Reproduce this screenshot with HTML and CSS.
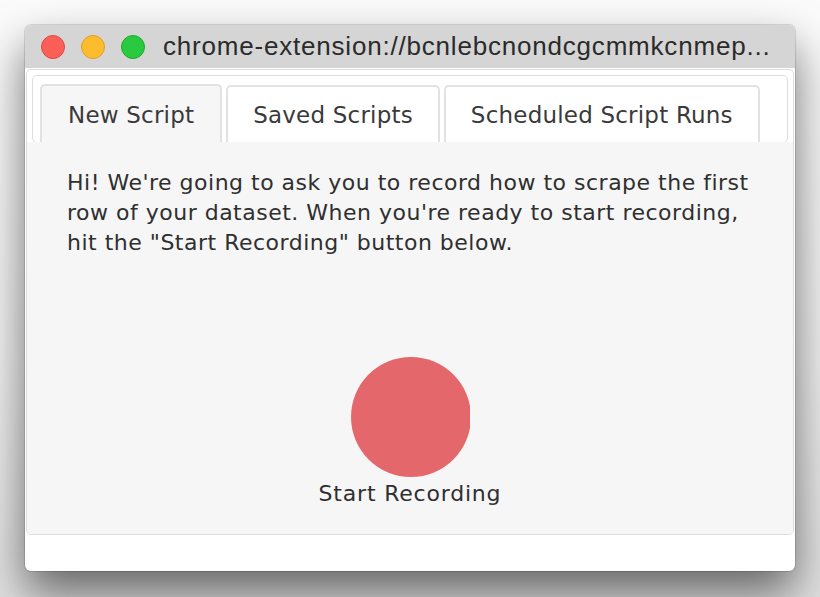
FILE: index.html
```html
<!DOCTYPE html>
<html>
<head>
<meta charset="utf-8">
<link rel="stylesheet" href="styles.css">
</head>
<body>
<div class="window">
  <div class="titlebar">
    <div class="lights">
      <span class="light red"></span>
      <span class="light yellow"></span>
      <span class="light green"></span>
    </div>
    <div class="title">chrome-extension://bcnlebcnondcgcmmkcnmep...</div>
  </div>
  <div class="body">
    <div class="tabs">
      <ul class="nav">
        <li class="tab active">New Script</li>
        <li class="tab">Saved Scripts</li>
        <li class="tab">Scheduled Script Runs</li>
      </ul>
      <div class="panel">
        <p class="intro">Hi! We're going to ask you to record how to scrape the first<br>row of your dataset. When you're ready to start recording,<br>hit the "Start Recording" button below.</p>
        <div class="record">
          <div class="dot-wrap"><div class="dot"></div></div>
          <div class="record-label">Start Recording</div>
        </div>
      </div>
    </div>
  </div>
</div>
</body>
</html>
```
FILE: styles.css
```css
html, body {
  margin: 0;
  padding: 0;
}
body {
  width: 820px;
  height: 597px;
  overflow: hidden;
  background: linear-gradient(#fbfbfb 0%, #f0f0f0 60%, #e0e0e0 100%);
  padding: 25px 0 0 25px;
  box-sizing: border-box;
  font-family: "DejaVu Sans", sans-serif;
}
.window {
  width: 770px;
  height: 546px;
  border-radius: 6px;
  background: #fff;
  overflow: hidden;
  box-shadow: 0 0 0 1px rgba(0,0,0,0.12), 0 22px 45px rgba(0,0,0,0.55);
  display: flex;
  flex-direction: column;
}
.titlebar {
  height: 43px;
  flex: none;
  background: #d5d5d5;
  display: flex;
  align-items: center;
  padding-left: 16px;
  box-sizing: border-box;
}
.lights {
  display: flex;
  gap: 16px;
}
.light {
  width: 24px;
  height: 24px;
  border-radius: 50%;
  box-sizing: border-box;
}
.red { background: #fc5f57; border: 1px solid #de4740; }
.yellow { background: #fdbc2e; border: 1px solid #dea123; }
.green { background: #29c940; border: 1px solid #1aab29; }
.title {
  margin-left: 18px;
  font-family: "Liberation Sans", sans-serif;
  font-size: 26px;
  letter-spacing: 0.8px;
  color: #2b2b2b;
  white-space: nowrap;
}
.body {
  flex: 1;
  padding: 1px 1px 0 1px;
  display: flex;
  flex-direction: column;
}
.tabs {
  height: 466px;
  border: 1px solid #dddddd;
  border-radius: 5px;
  background: #fff;
  display: flex;
  flex-direction: column;
  box-sizing: border-box;
  overflow: hidden;
}
.nav {
  list-style: none;
  margin: 5px 5px 0 5px;
  padding: 9px 0 0 7px;
  height: 68px;
  box-sizing: border-box;
  border: 1px solid #dddddd;
  border-radius: 5px;
  display: flex;
  gap: 4px;
  align-items: flex-end;
}
.tab {
  height: 58px;
  box-sizing: border-box;
  border: 2px solid #e2e2e2;
  border-bottom: none;
  border-radius: 5px 5px 0 0;
  background: #fff;
  padding: 0 25px;
  display: flex;
  align-items: center;
  font-size: 23px;
  letter-spacing: 0.2px;
  color: #3a3a3a;
  margin-bottom: -1px;
  white-space: nowrap;
}
.tab.active {
  background: #f6f6f6;
  height: 59px;
  padding: 0 26px;
}
.panel {
  flex: 1;
  background: #f6f6f6;
  margin-top: -1px;
  display: flex;
  flex-direction: column;
  align-items: center;
}
.intro {
  margin: 26px 30px 0 40px;
  font-size: 22px;
  letter-spacing: 0.5px;
  line-height: 30px;
  color: #2f2f2f;
  align-self: stretch;
  white-space: nowrap;
}
.record {
  margin-top: 99px;
  display: flex;
  flex-direction: column;
  align-items: center;
}
.dot-wrap {
  width: 119px;
  height: 120px;
  overflow: hidden;
}
.dot {
  width: 120px;
  height: 120px;
  border-radius: 50%;
  background: #e4686b;
}
.record-label {
  font-size: 22px;
  letter-spacing: 0.8px;
  color: #2f2f2f;
  margin-top: 4px;
}
```
